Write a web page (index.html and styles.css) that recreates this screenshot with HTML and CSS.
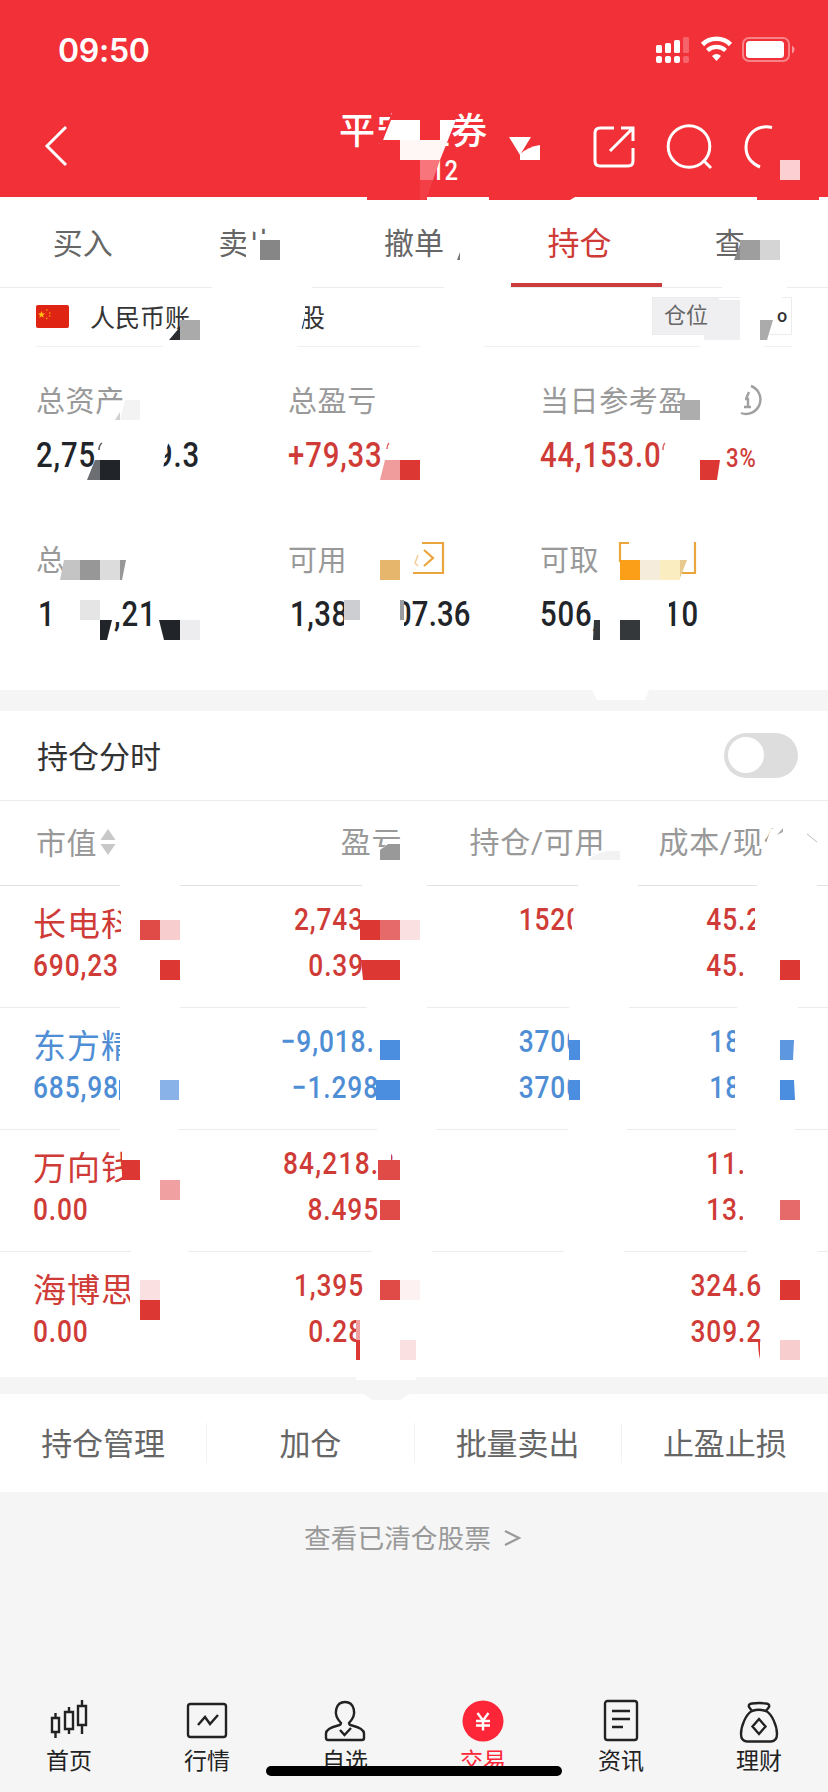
FILE: index.html
```html
<!DOCTYPE html>
<html lang="zh-CN">
<head>
    <meta charset="UTF-8">
    <meta name="viewport" content="width=device-width, initial-scale=1.0">
    <title>持仓</title>
    <link rel="stylesheet" href="styles.css">
</head>
<body>
    <header class="header">
        <div class="status">
            <span class="time">09:50</span>
            <svg class="status-icons" width="140" height="28" viewBox="0 0 140 28" fill="#fff">
                <rect x="0" y="9" width="6" height="8" rx="1.5"/>
                <rect x="9" y="7" width="6" height="10" rx="1.5"/>
                <rect x="18" y="4" width="6" height="13" rx="1.5"/>
                <rect x="27" y="1" width="6" height="16" rx="1.5" opacity=".25"/>
                <rect x="0" y="20" width="6" height="7" rx="2"/>
                <rect x="9" y="20" width="6" height="7" rx="2"/>
                <rect x="18" y="20" width="6" height="7" rx="2"/>
                <rect x="27" y="20" width="6" height="7" rx="2" opacity=".25"/>
                <path d="M46.500 8.500a20 20 0 0 1 28 0" fill="none" stroke="#fff" stroke-width="4.600"/>
                <path d="M51.500 14.500a13 13 0 0 1 18 0" fill="none" stroke="#fff" stroke-width="4.200"/>
                <path d="M56 20q4.500-4 9 0l-4.500 5z"/>
                <rect x="87" y="2" width="46" height="23" rx="6" fill="none" stroke="#fff" stroke-width="2" opacity=".4"/>
                <rect x="90" y="5" width="38" height="17" rx="3.500"/>
                <path d="M136 9.500q5 4 0 8z" opacity=".5"/>
            </svg>
        </div>
        <nav class="navbar">
            <svg class="back" width="26" height="44" viewBox="0 0 26 44"><path d="M22 3L3 22l19 19" fill="none" stroke="#fff" stroke-width="3"/></svg>
            <div class="title">
                <h1>平安证券</h1>
                <p><span class="din">12</span></p>
            </div>
            <svg class="caret" width="24" height="20" viewBox="0 0 24 20"><path d="M1 1h22L12 19z" fill="#fff"/></svg>
            <svg class="actions" width="200" height="48" viewBox="0 0 200 48" fill="none" stroke="#fff" stroke-width="3">
                <path d="M24 6H10q-5 0-5 5v28q0 5 5 5h28q5 0 5-5V26M31 6h12v13M43 6L20 29"/>
                <circle cx="99" cy="24.500" r="20.800"/>
                <path d="M113 38l8 8"/>
                <path d="M182 5.500C165 2 156 14 156 25q0 14 14 20"/>
            </svg>
        </nav>
    </header>

    <ul class="tabs">
        <li>买入</li>
        <li>卖出</li>
        <li>撤单</li>
        <li class="active">持仓</li>
        <li class="last">查</li>
    </ul>

    <section class="account">
        <svg width="33" height="23" viewBox="0 0 33 23">
            <rect width="33" height="23" rx="2" fill="#df2413"/>
            <path d="M5.500 6l1 2.400 2.500.2-2 1.600.7 2.500-2.200-1.400-2.200 1.400.7-2.500-2-1.600 2.500-.2z" fill="#fdbf12"/>
            <path d="M10 5h1.500M13 8h1.500M13 11h1.500M10 13.500h1.500" stroke="#f58a12" stroke-width="1.500"/>
        </svg>
        <span class="account-name">人民币账</span>
        <span class="account-type">股</span>
        <div class="position"><span class="position-label">仓位</span><span class="position-value">o</span></div>
    </section>

    <section class="stats">
        <div class="stat">
            <div class="label">总资产</div>
            <div class="value"><span class="din">2,75</span><span class="din tail-a">9.3</span></div>
        </div>
        <div class="stat">
            <div class="label">总盈亏</div>
            <div class="value up"><span class="din">+79,33</span></div>
        </div>
        <div class="stat">
            <div class="label">当日参考盈</div>
            <div class="value up"><span class="din">44,153.0</span><span class="din pct">3%</span></div>
        </div>
        <div class="stat">
            <div class="label">总</div>
            <div class="value"><span class="din lead">1</span><span class="din tail-b">,21</span></div>
        </div>
        <div class="stat">
            <div class="label">可用</div>
            <div class="value"><span class="din lead">1,38</span><span class="din tail-c">07.36</span></div>
        </div>
        <div class="stat">
            <div class="label">可取</div>
            <div class="value"><span class="din">506,</span><span class="din tail-d">10</span></div>
        </div>
    </section>

    <section class="timeline">
        <span>持仓分时</span>
        <i class="switch"></i>
    </section>

    <section class="table">
        <div class="row head">
            <div class="name">市值<svg width="16" height="28" viewBox="0 0 16 28" fill="#c8c8c8"><path d="M8 1l7.500 11H.5zM.5 16h15L8 27z"/></svg></div>
            <div class="num">盈亏</div>
            <div class="num hold">持仓/可用</div>
            <div class="num">成本/现价</div>
        </div>
        <div class="row up">
            <div class="name"><b>长电科</b><span class="din">690,23</span></div>
            <div class="num"><span class="din cut-float">2,743</span><span class="din cut-float">0.39</span></div>
            <div class="num"><span class="din cut-1">1520</span></div>
            <div class="num"><span class="din cut-2">45.2</span><span class="din cut-3">45.</span></div>
        </div>
        <div class="row down">
            <div class="name"><b>东方精</b><span class="din">685,98</span></div>
            <div class="num"><span class="din cut-float">−9,018.</span><span class="din cut-pct">−1.298</span></div>
            <div class="num"><span class="din cut-1">3700</span><span class="din cut-1">3700</span></div>
            <div class="num"><span class="din cut-dot3">18</span><span class="din cut-dot3">18</span></div>
        </div>
        <div class="row up">
            <div class="name"><b>万向钱</b><span class="din">0.00</span></div>
            <div class="num"><span class="din cut-pct wide">84,218.3</span><span class="din cut-pct">8.495</span></div>
            <div class="num"></div>
            <div class="num"><span class="din cut-3">11.</span><span class="din cut-3">13.</span></div>
        </div>
        <div class="row up">
            <div class="name"><b>海博思</b><span class="din">0.00</span></div>
            <div class="num"><span class="din cut-float">1,395</span><span class="din cut-float">0.28</span></div>
            <div class="num"></div>
            <div class="num"><span class="din cut-2">324.6</span><span class="din cut-2">309.2</span></div>
        </div>
    </section>

    <ul class="buttons">
        <li>持仓管理</li>
        <li>加仓</li>
        <li>批量卖出</li>
        <li>止盈止损</li>
    </ul>

    <div class="cleared">查看已清仓股票<svg width="18" height="20" viewBox="0 0 18 20"><path d="M1 3l14 7-14 7" fill="none" stroke="#999" stroke-width="2.200"/></svg></div>

    <footer class="tabbar">
        <div class="tab">
            <svg viewBox="0 0 44 44"><path d="M5 19h7v14H5zM8.500 14v5M8.500 33v6M18 13h8v17h-8zM22 8v5M22 30v5M31 7h8v19h-8zM35 1v6M35 26v9"/></svg>
            首页
        </div>
        <div class="tab">
            <svg viewBox="0 0 44 44"><rect x="3" y="5" width="38" height="33" rx="2.500"/><path d="M13 26l7-8 5 7 8-9"/></svg>
            行情
        </div>
        <div class="tab">
            <svg viewBox="0 0 44 44"><path d="M18 24C9 15 13 3 22 3s13 12 4 21q0 2 3 2.500c8 2 12 4 12 8V39q0 2-2 2H5q-2 0-2-2v-4.500c0-4 4-6 12-8q3-.5 3-2.500zM17 31l4.500 5 6.500-7"/></svg>
            自选
        </div>
        <div class="tab current">
            <svg viewBox="0 0 44 44"><circle cx="22" cy="22" r="20.500"/><path d="M16.500 14l5.500 7.500 5.500-7.500M15 22h14M15 26.500h14M22 22v9.500"/></svg>
            交易
        </div>
        <div class="tab">
            <svg viewBox="0 0 44 44"><rect x="6" y="2" width="32" height="39" rx="2.500"/><path d="M13 12h18M13 20h18M13 28h11"/></svg>
            资讯
        </div>
        <div class="tab">
            <svg viewBox="0 0 44 44"><path d="M15 12l-3-4q-1-3 3-3.500 7-1 14 0 4 .5 3 3.500l-3 4q-7-2.500-14 0C9 15 4 27 4 35q0 7 6 7.500h24q6-.5 6-7.500c0-8-5-20-11-23M22 20l6.500 7.500L22 35l-6.500-7.500z"/></svg>
            理财
        </div>
    </footer>
    <i class="home-indicator"></i>

    <!-- privacy mask over names and amounts -->
    <svg class="mask" width="828" height="1792" viewBox="0 0 828 1792">
        <!-- header -->
        <g fill="#f23038">
            <path d="M394 108h60v12l-6 22h-46l-24 18-2-8z"/>
            <path d="M367 197h60v3h-60zM489 197h86l-5 3h-81zM757 197h62v3h-62z"/>
        </g>
        <path d="M391 120h29v20h-37zM440 120h16l-8 20h-8z" fill="#fff"/>
        <path d="M400 140h48l-8 20h-40z" fill="#fff6f6"/>
        <path d="M420 160h20l-7 20h-13z" fill="#f7757b"/>
        <path d="M420 180h13l-7 20h-6z" fill="#f33e46"/>
        <path d="M520 160v-6q8-7 20-9v15z" fill="#fff"/>
        <path d="M780 160h20v20h-20z" fill="#fcd0d3"/>

        <!-- tabs and account -->
        <g fill="#fff">
            <path d="M246 240h40v24h-40zM266 228h20v16h-20zM256 234h12v8h-12zM246 227h6v14h-6zM254 228h7v4h-7z"/>
            <path d="M212 285h100v4H212zM444 285h66v4h-66zM722 285h65v4h-65z"/>
            <path d="M163 345h134v4H163zM420 345h64v4h-64zM700 345h64v4h-64zM180 320h12v14h-12z"/>
            <path d="M740 295h43l-14 42h-29zM298 305h7v10l-4 16h-3z"/>
        </g>
        <path d="M260 240h20v20h-20z" fill="#868686"/>
        <path d="M460 252v8h-3z" fill="#777"/>
        <path d="M740 244v16h-6z" fill="#888"/>
        <path d="M740 240h20v20h-20z" fill="#9e9e9e"/>
        <path d="M760 240h20v20h-20z" fill="#d5d5d5"/>
        <path d="M180 327v13h-11z" fill="#2b2d30"/>
        <path d="M180 320h20v20h-20z" fill="#aaa"/>
        <path d="M704 334h6v-34h30v40h-36z" fill="#efeff1"/>
        <path d="M760 320h13l-6 20h-7z" fill="#ababab"/>

        <!-- stats -->
        <path d="M125 400h10v20h-20zM155 436h15l-5 20-2 14h-8zM395 598h9v30h-9zM600 595h69v35h-69zM344 620h6v10h-6z" fill="#fff"/>
        <path d="M125 400h15v20h-20z" fill="#f3f3f3"/>
        <path d="M120 412v8h-5z" fill="#d0d0d0"/>
        <path d="M102 443q-3 2-3 7" stroke="#55585c" stroke-width="1.500" fill="none"/>
        <path d="M95 460h5v20H87z" fill="#6c6e72"/>
        <path d="M100 460h20v20h-20zM100 620h12l-5 20h-7zM159 620h21v20h-16z" fill="#212429"/>
        <path d="M389 443q-2 2-2 6M665 443q-2 2-2 7" stroke="#dd6a66" stroke-width="1.500" fill="none"/>
        <path d="M385 460h15v20h-20z" fill="#f09c9c"/>
        <path d="M400 460h20v20h-20zM700 460h20l-3 20h-17z" fill="#dd3733"/>
        <path d="M680 400h20v20h-20z" fill="#adadad"/>
        <path d="M751 386a14 14 0 1 1-10 27M749 392l-3 7M745 399h3v8M744 407h7" fill="none" stroke="#a0a0a0" stroke-width="2.400"/>
        <path d="M64 560h16v20H60z" fill="#c4c4c4"/>
        <path d="M80 560h20v20H80zM120 560h6l-4 20h-2z" fill="#979797"/>
        <path d="M100 560h20v20h-20z" fill="#dcdcdc"/>
        <path d="M80 600h20v20H80z" fill="#e5e5e5"/>
        <path d="M180 620h20v20h-20z" fill="#ededf0"/>
        <path d="M380 560h20v20h-20z" fill="#e6b66c"/>
        <path d="M422 543h21v30h-30M424 550l9 8-9 8M620 562v-19h9M682 573h13v-31" fill="none" stroke="#eba53f" stroke-width="2.200"/>
        <path d="M418 555l-3 8 3 3" fill="none" stroke="#f3cf98" stroke-width="1.500"/>
        <path d="M344 600h16v20h-16z" fill="#ccced1"/>
        <path d="M400 600h4v20h-4z" fill="#999ca0"/>
        <path d="M620 560h20v20h-20z" fill="#fc9f18"/>
        <path d="M640 560h20v20h-20z" fill="#f5ecdc"/>
        <path d="M660 560h20v20h-20z" fill="#faedc0"/>
        <path d="M680 560h7l-7 18z" fill="#e8c88c"/>
        <path d="M594 620h6v20h-7zM620 620h20v20h-20z" fill="#34383b"/>
        <path d="M592 690h57l-4 10h-48z" fill="#fff"/>

        <!-- table head -->
        <path d="M771 829l-4 11-3 20h40v-34h-16zM588 860l9-9 8-1v12zM380 861v-12l8-5h14v17zM120 883h60v4h-60zM362 883h65v4h-65zM578 883h60v4h-60zM757 883h60v4h-60z" fill="#fff"/>
        <path d="M380 850l8-6h12v16h-20z" fill="#999"/>
        <path d="M588 860q12-11 32-9v9z" fill="#f2f2f2"/>
        <path d="M783 828v4l-6 3z" fill="#aaa"/>
        <path d="M807 834l10 8" stroke="#bbb"/>
        <!-- row lines -->
        <path d="M120 1005h60v4h-60zM367 1005h60v4h-60zM569 1005h60v4h-60zM737 1005h61v4h-61zM120 1127h58v4h-58zM377 1127h59v4h-59zM568 1127h59v4h-59zM736 1127h59v4h-59zM131 1249h57v4h-57zM372 1249h60v4h-60zM564 1249h60v4h-60zM747 1249h71v4h-71z" fill="#fff"/>
        <!-- clipped characters -->
        <path d="M121 900h19v44h-19zM360 904h12v32h-12zM574 904h14l-2 30h-14v-12zM755 904h14v30h-14zM120 1026h20v44h-20zM569 1026h16v76h-16zM735 1026h12v76h-12zM122 1148h18v44h-18zM379 1148h12v32h-12zM743 1150h10v70h-10zM130 1270h10v44h-10zM360 1316h12v32h-12z" fill="#fff"/>
        <g fill="#dd3733">
            <path d="M160 960h20v20h-20zM360 920h20v20h-20zM361 960h39v20h-37zM780 960h20v20h-20z"/>
            <path d="M122 1160h18v20h-18zM140 1300h20v20h-20zM780 1280h20v20h-20zM356 1340h4v20h-4zM758 1340h2v19q-2-8-2-19z"/>
        </g>
        <g fill="#e04b47">
            <path d="M140 920h20v20h-20zM378 1160h22v20h-22zM380 1200h20v20h-20zM380 1280h20v20h-20z"/>
        </g>
        <path d="M380 920h20v20h-20zM780 1200h20v20h-20z" fill="#e66a69"/>
        <path d="M160 920h20v20h-20zM780 1340h20v20h-20z" fill="#f7cdce"/>
        <path d="M400 920h20v20h-20zM140 1280h20v20h-20zM400 1340h16v20h-16z" fill="#fae0e0"/>
        <path d="M400 1280h20v20h-20z" fill="#fef1f1"/>
        <path d="M160 1180h20v20h-20zM356 1320h4v20h-4z" fill="#f0a0a0"/>
        <path d="M380 1040h20v20h-20zM376 1080h24v20h-24zM569 1040h11v20h-11zM569 1080h11v20h-11zM780 1080h14l1 20h-15zM119 1080h1v20h-1z" fill="#4b8ddf"/>
        <path d="M780 1040h14l-1 20h-13z" fill="#5c97e0"/>
        <path d="M160 1080h19v20h-19z" fill="#88b2e8"/>
        <path d="M356 1376h60v4h-60z" fill="#fff"/>
        <path d="M364 1394h46l-10 6h-28z" fill="#f5f5f5"/>
    </svg>
</body>
</html>
```

FILE: styles.css
```css
* {
    box-sizing: border-box;
    margin: 0;
    padding: 0;
}

body {
    position: relative;
    width: 828px;
    height: 1792px;
    background: #f5f5f5;
    color: #333;
    font-family: Roboto, 'Noto Sans CJK SC', sans-serif;
    font-weight: 400;
    overflow: hidden;
}

ul {
    list-style: none;
}

/* narrow figures */
.din {
    display: inline-block;
    font-family: Roboto, sans-serif;
    font-weight: 500;
    letter-spacing: 1px;
    transform: scaleX(.85);
    transform-origin: left center;
}

.header {
    height: 197px;
    background: #f23038;
    color: #fff;
}

.status {
    display: flex;
    justify-content: space-between;
    height: 100px;
    padding: 0 32px 0 58px;
    align-items: center;
}

.time {
    font-family: Inter, sans-serif;
    font-size: 32px;
    font-weight: 600;
    letter-spacing: -.3px;
}

.navbar {
    display: flex;
    height: 97px;
    padding-left: 44px;
}

.back {
    margin-top: 24px;
}

.title {
    width: 150px;
    margin-left: 269px;
}

.title h1 {
    font-size: 36px;
    font-weight: 500;
    letter-spacing: 1.4px;
    line-height: 54px;
    margin-top: 5px;
    white-space: nowrap;
}

.title p {
    padding-left: 92px;
    font-size: 28px;
    line-height: 24px;
}

.title .din {
    letter-spacing: 0;
}

.caret {
    margin: 36px 0 0 19px;
}

.actions {
    margin: 22px 0 0 58px;
}

.tabs {
    display: flex;
    height: 91px;
    background: #fff;
    border-bottom: 1px solid #ececec;
    color: #666;
    font-size: 30px;
    line-height: 94px;
}

.tabs li {
    flex: 0 0 20%;
    height: 90px;
    text-align: center;
}

.tabs .last {
    padding-right: 31px;
}

.tabs .active {
    background: linear-gradient(#cb3d3d, #cb3d3d) no-repeat 14px 86px / 151px 4px;
    color: #cf3c37;
    font-size: 32px;
}

.account {
    display: flex;
    align-items: center;
    height: 60px;
    padding: 0 36px;
    background: linear-gradient(#f0f0f0, #f0f0f0) no-repeat 36px 58px / 756px 1px #fff;
    font-size: 25px;
}

.account svg {
    margin-top: -3px;
}

.account-name {
    width: 190px;
    margin: -4px 0 0 21px;
}

.account-type {
    margin: -4px 0 0 20px;
}

.position {
    display: flex;
    width: 140px;
    height: 38px;
    margin: -4px 0 0 auto;
    border: 1px solid #ececec;
    line-height: 36px;
}

.position-label {
    width: 66px;
    padding-left: 11px;
    background: #efeff1;
    color: #666;
    font-size: 22px;
}

.position-value {
    margin-left: 58px;
    font-size: 18px;
    font-weight: 500;
}

.stats {
    display: grid;
    grid-template-columns: 252px 252px 1fr;
    grid-auto-rows: 159px;
    height: 342px;
    padding: 26px 36px 0;
    background: #fff;
}

.label {
    height: 52px;
    color: #999;
    font-size: 29px;
    letter-spacing: .6px;
    line-height: 56px;
}

.value {
    color: #212429;
    font-size: 34.5px;
    line-height: 58px;
}

.up {
    color: #cf3c37;
}

.down {
    color: #4f8ed5;
}

.lead {
    margin-left: 2px;
    letter-spacing: .6px;
}

.tail-a {
    margin-left: 49px;
}

.tail-b {
    margin-left: 56px;
}

.tail-c {
    margin-left: 36px;
    letter-spacing: .2px;
}

.tail-d {
    margin-left: 53px;
}

.pct {
    margin-left: 43px;
    font-size: 26px;
}

.timeline {
    display: flex;
    justify-content: space-between;
    align-items: center;
    height: 90px;
    margin-top: 21px;
    padding: 0 30px 0 37px;
    background: #fff;
    border-bottom: 1px solid #ececec;
    font-size: 31px;
}

.timeline span {
    margin-top: -2px;
}

.switch {
    width: 74px;
    height: 45px;
    padding: 4px;
    border-radius: 23px;
    background: #ddd;
}

.switch::before {
    content: '';
    display: block;
    width: 36px;
    height: 36px;
    border-radius: 50%;
    background: #fff;
}

.table {
    height: 576px;
    background: #fff;
}

.row {
    display: grid;
    grid-template-columns: 233px 136px 196px 196px;
    height: 122px;
    padding: 11px 33px 0;
    border-bottom: 1px solid #ececec;
    font-size: 31px;
    line-height: 46px;
}

.row:last-child {
    border-bottom: 0;
}

.row.head {
    height: 85px;
    padding-top: 19px;
    border-color: #e2e2e2;
    color: #999;
    font-size: 30px;
    letter-spacing: .6px;
    white-space: nowrap;
}

.head .name {
    display: flex;
    align-items: center;
    height: 48px;
    padding-left: 3px;
}

.head svg {
    margin: -4px 0 0 3px;
}

.head .hold {
    margin-right: -7px;
}

.name b {
    display: block;
    height: 46px;
    font-size: 33px;
    font-weight: 400;
    letter-spacing: 1px;
    line-height: 56px;
}

.num {
    text-align: right;
}

.num .din {
    display: block;
    transform-origin: right center;
}

/* room kept for the hidden digits */
.cut-1 {
    margin-right: 16px;
}

.cut-2 {
    margin-right: 32px;
}

.cut-3 {
    margin-right: 48px;
}

.cut-dot3 {
    margin-right: 53px;
}

.cut-float {
    margin-right: 38px;
}

.cut-pct {
    margin-right: 23px;
}

.num .wide {
    letter-spacing: 1.4px;
}

.buttons {
    display: flex;
    align-items: center;
    height: 98px;
    margin-top: 17px;
    background: #fff;
    color: #666;
    font-size: 31px;
}

.buttons li {
    flex: 1;
    height: 40px;
    border-left: 1px solid #f2f2f2;
    line-height: 43px;
    text-align: center;
}

.buttons li:first-child {
    border: 0;
}

.cleared {
    height: 193px;
    padding: 26px 2px 0 0;
    color: #999;
    font-size: 26.7px;
    line-height: 42px;
    text-align: center;
}

.cleared svg {
    margin-left: 13px;
}

.tabbar {
    display: flex;
    height: 107px;
    padding-top: 14px;
    color: #222;
    font-size: 23px;
}

.tab {
    display: flex;
    flex: 1;
    flex-direction: column;
    align-items: center;
    line-height: 38px;
}

.tab svg {
    width: 44px;
    height: 44px;
    fill: none;
    stroke: #222;
    stroke-width: 2.4;
}

.current {
    color: #fd2638;
}

.current circle {
    fill: #fd2638;
    stroke: none;
}

.current path {
    stroke: #fff;
}

.home-indicator {
    position: absolute;
    left: 266px;
    top: 1766px;
    width: 296px;
    height: 10px;
    border-radius: 5px;
    background: #000;
}

.mask {
    position: absolute;
    left: 0;
    top: 0;
}
```
